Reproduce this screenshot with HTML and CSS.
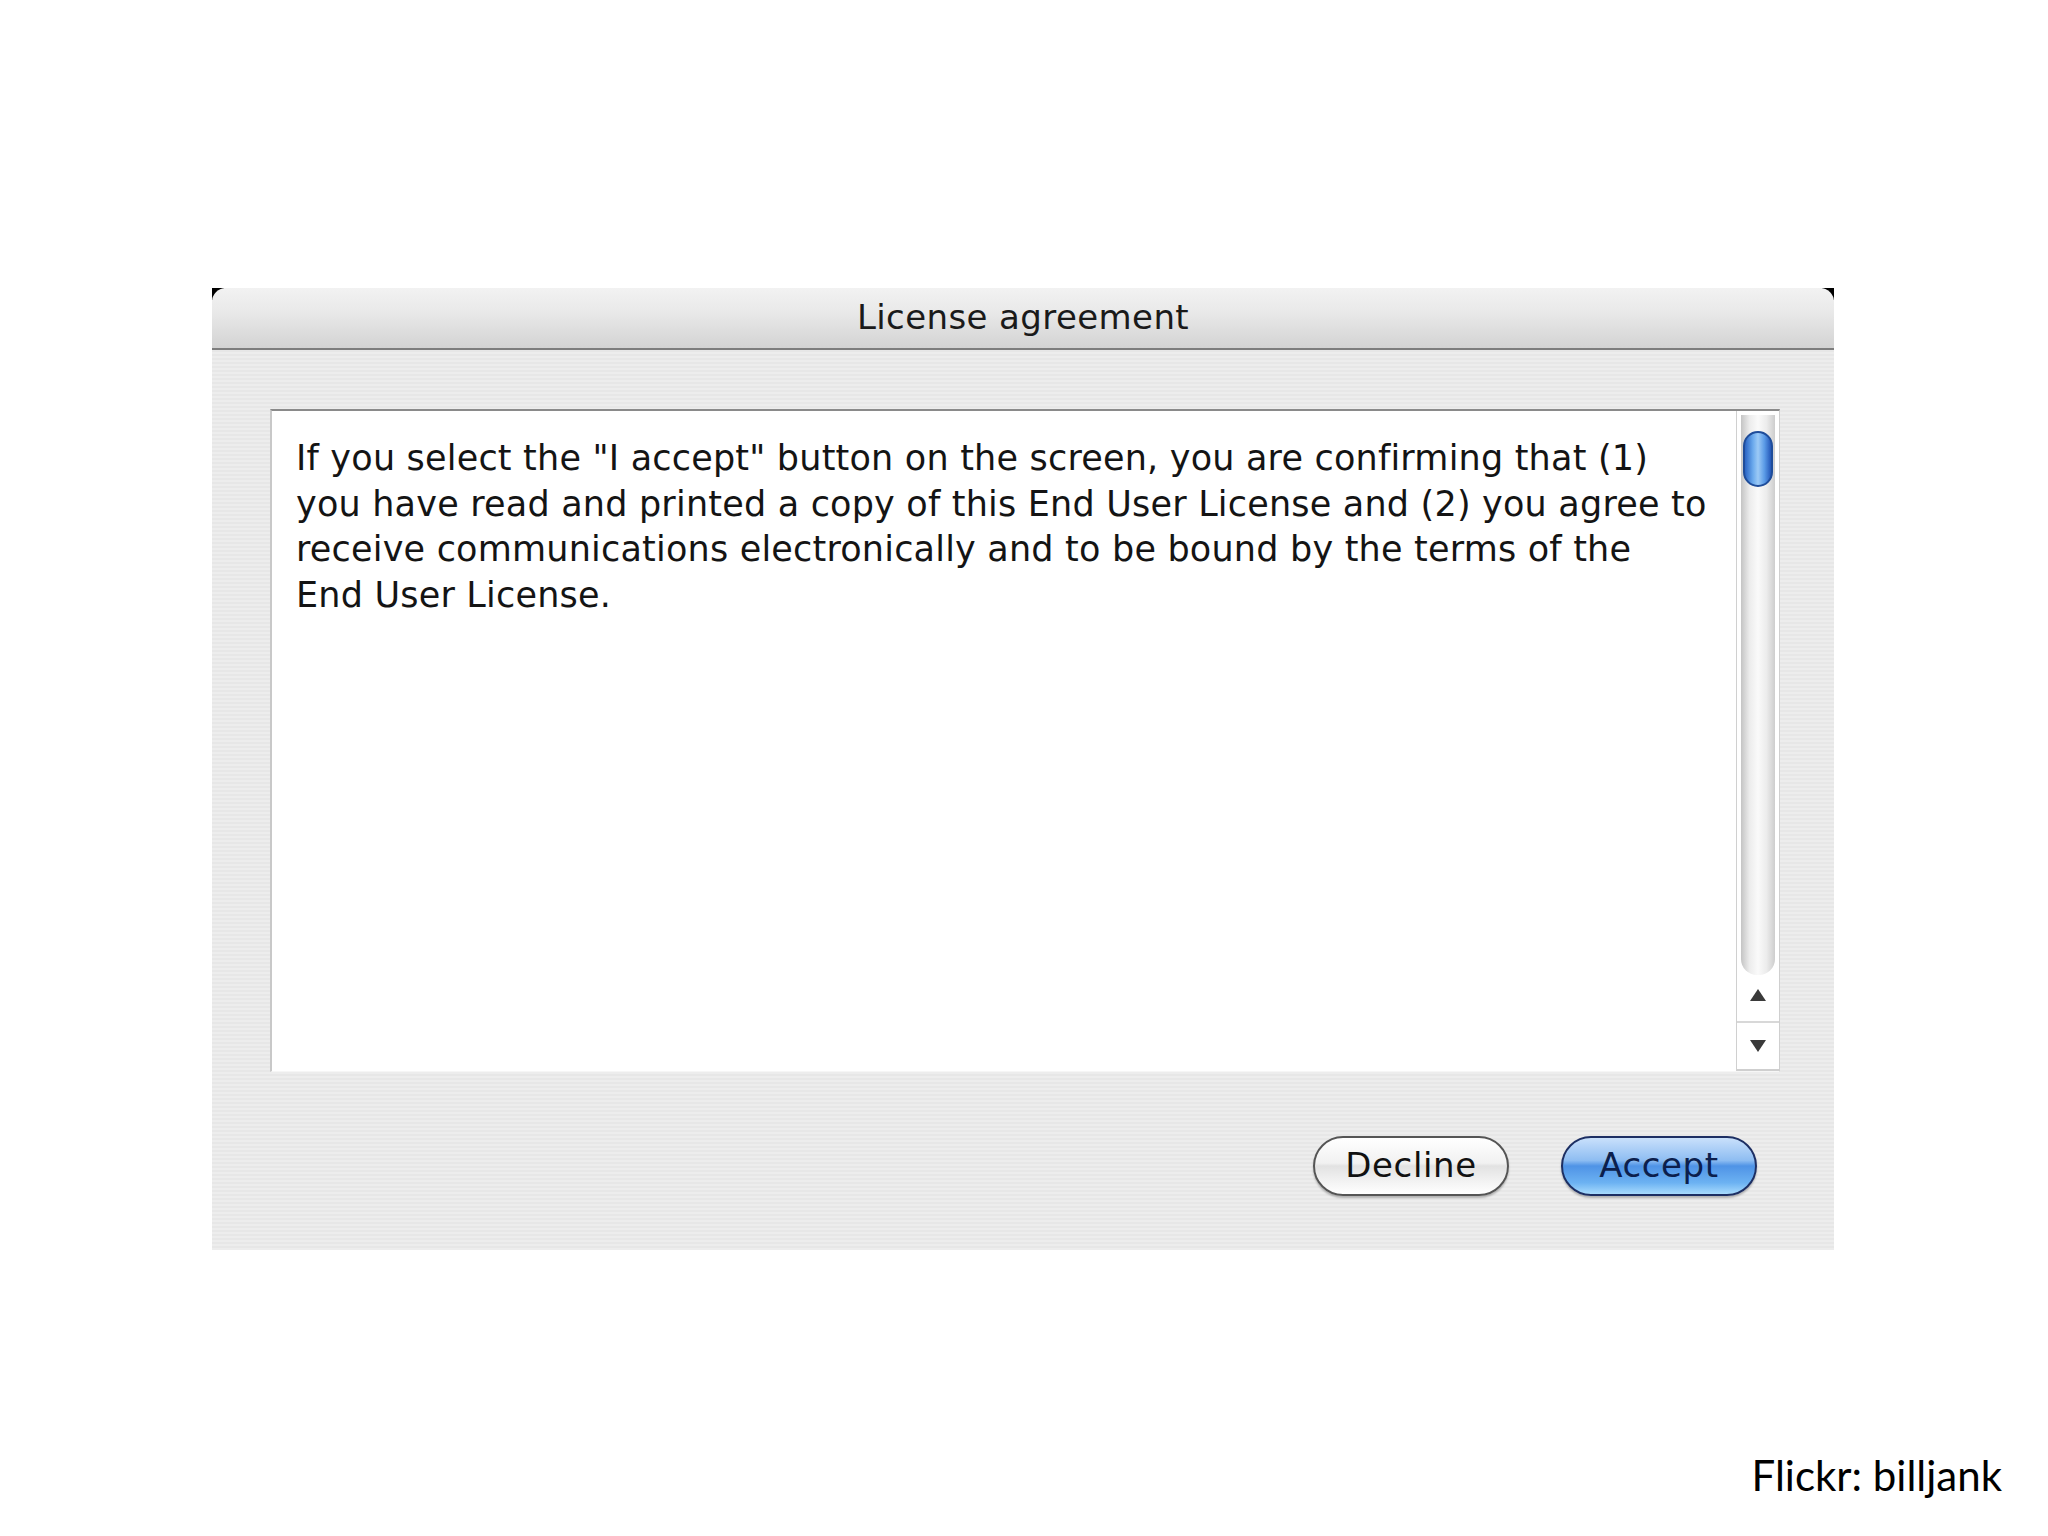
FILE: index.html
```html
<!DOCTYPE html>
<html>
<head>
<meta charset="utf-8">
<title>License agreement</title>
<link rel="stylesheet" href="styles.css">
</head>
<body>
	<div class="dialog">
		<div class="titlebar">License agreement</div>
		<div class="content">
			<div class="textbox">
				<div class="licensetext">
					<p>If you select the "I accept" button on the screen, you are confirming that (1)<br>you have read and printed a copy of this End User License and (2) you agree to<br>receive communications electronically and to be bound by the terms of the<br>End User License.</p>
				</div>
				<div class="scrollbar">
					<div class="track">
						<div class="thumb"></div>
					</div>
					<div class="arrow up">
						<svg width="18" height="14" viewBox="0 0 18 14"><path d="M9 1 L17 13 L1 13 Z" fill="#3a3a3a"/></svg>
					</div>
					<div class="arrow down">
						<svg width="18" height="14" viewBox="0 0 18 14"><path d="M1 1 L17 1 L9 13 Z" fill="#3a3a3a"/></svg>
					</div>
				</div>
			</div>
			<div class="buttons">
				<div class="button">Decline</div>
				<div class="button default">Accept</div>
			</div>
		</div>
	</div>
	<div class="credit">Flickr: billjank</div>
</body>
</html>
```

FILE: styles.css
```css
body {
	margin: 0;
	background: #fff;
	font-family: "DejaVu Sans", Arial, sans-serif;
	color: #111;
}

.dialog {
	position: relative;
	width: 1622px;
	margin: 288px 0 0 212px;
	background: repeating-linear-gradient(to bottom, #ededed 0px, #ededed 2px, #e7e7e7 2px, #e7e7e7 4px);
}

/* black corners behind the rounded title bar */
.dialog::before,
.dialog::after {
	content: "";
	position: absolute;
	top: 0;
	width: 12px;
	height: 12px;
	background: #000;
}
.dialog::before { left: 0; }
.dialog::after { right: 0; }

.titlebar {
	position: relative;
	z-index: 1;
	height: 60px;
	line-height: 58px;
	text-align: center;
	font-size: 34px;
	letter-spacing: 0.4px;
	color: #1a1a1a;
	border-radius: 14px 14px 0 0;
	border-bottom: 2px solid #7d7d7d;
	background: linear-gradient(to bottom, #f2f2f2 0%, #e9e9e9 40%, #d3d3d3 100%);
}

.content {
	padding: 59px 54px 54px 58px;
}

.textbox {
	display: flex;
	height: 660px;
	border-top: 2px solid #8a8a8a;
	border-left: 2px solid #c8c8c8;
	border-right: 1px solid #cfcfcf;
	border-bottom: 1px solid #f6f6f6;
	background: #fff;
}

.licensetext {
	flex: 1;
	padding: 25px 0 0 24px;
}

.licensetext p {
	margin: 0;
	font-size: 35px;
	letter-spacing: 0.2px;
	line-height: 45.7px;
	color: #141414;
}

.scrollbar {
	width: 42px;
	display: flex;
	flex-direction: column;
	border-left: 1px solid #d0d0d0;
	background: #fff;
}

.track {
	flex: 1;
	margin: 4px 4px 0 4px;
	padding-top: 16px;
	border-radius: 0 0 16px 16px;
	background: linear-gradient(to right, #c4c4c4 0%, #ececec 25%, #fafafa 50%, #ececec 75%, #cdcdcd 100%);
}

.thumb {
	width: 30px;
	height: 56px;
	margin: 0 auto;
	border-radius: 15px;
	border: 2px solid #1f4d9a;
	box-sizing: border-box;
	background: linear-gradient(to right, #2a64c4 0%, #6aa9ec 30%, #9ccaf6 50%, #5a9ae6 75%, #2457b8 100%);
}

.arrow {
	height: 46px;
	display: flex;
	align-items: center;
	justify-content: center;
}

.arrow.up {
	padding-bottom: 6px;
	height: 40px;
}

.arrow.down {
	border-top: 2px solid #d8d8d8;
	border-bottom: 2px solid #cfcfcf;
}

.buttons {
	display: flex;
	justify-content: flex-end;
	gap: 52px;
	padding: 64px 23px 0 0;
}

.button {
	width: 196px;
	height: 60px;
	box-sizing: border-box;
	border-radius: 30px;
	border: 2px solid #555;
	text-align: center;
	line-height: 54px;
	font-size: 34px;
	letter-spacing: 0.6px;
	color: #111;
	background: linear-gradient(to bottom, #ffffff 0%, #f1f1f1 45%, #e2e2e2 50%, #f4f4f4 80%, #ffffff 100%);
	box-shadow: 0 2px 2px rgba(0, 0, 0, 0.25);
}

.button.default {
	border-color: #1d2f63;
	color: #0c1f4d;
	background: linear-gradient(to bottom, #c9e0fb 0%, #8ebdf2 40%, #4f93e6 50%, #6cb2f2 80%, #a8dbfd 100%);
}

.credit {
	margin: 200px 46px 0 0;
	text-align: right;
	font-family: Lato, "Open Sans", sans-serif;
	font-size: 42px;
	color: #000;
}
```
